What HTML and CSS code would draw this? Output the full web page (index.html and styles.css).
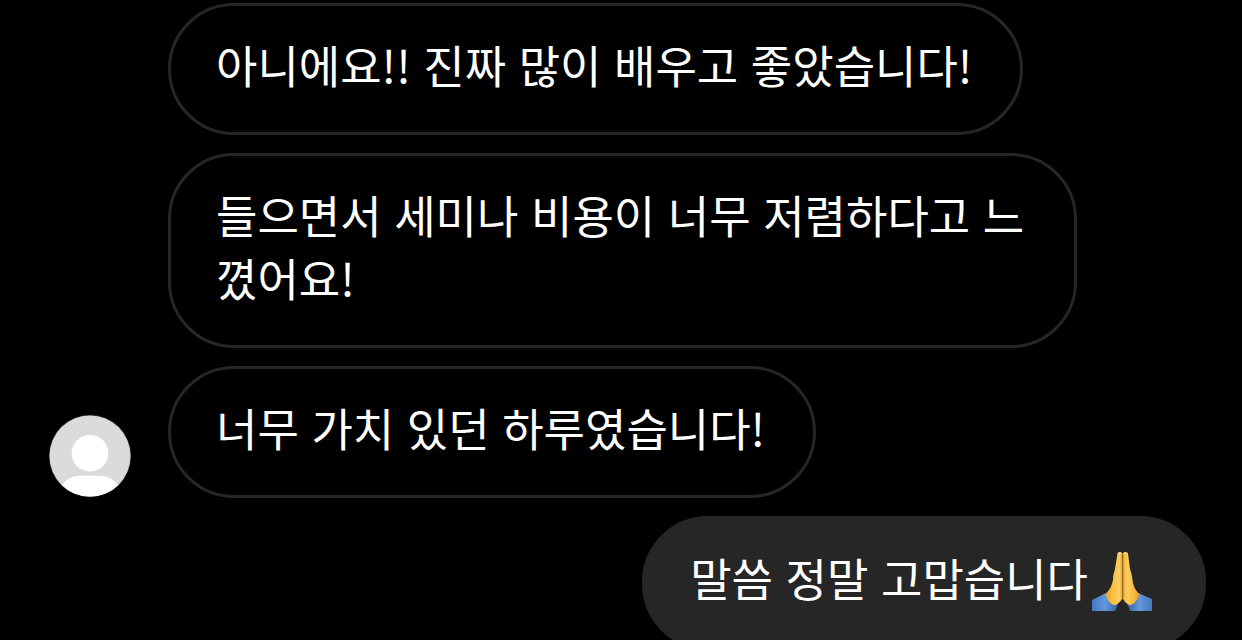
FILE: index.html
```html
<!DOCTYPE html>
<html lang="ko">
<head>
<meta charset="utf-8">
<meta name="viewport" content="width=device-width, initial-scale=1">
<title>메시지</title>
<link rel="stylesheet" href="styles.css">
</head>
<body>
<main class="chat">
  <section class="incoming">
    <svg class="avatar" viewBox="0 0 84 84" aria-hidden="true">
      <defs><clipPath id="disc"><circle cx="42" cy="42" r="40.5"/></clipPath></defs>
      <circle cx="42" cy="42" r="41.2" fill="#3a3a3a"/>
      <circle cx="42" cy="42" r="40.5" fill="#dbdbdb"/>
      <circle cx="42" cy="39.2" r="18.3" fill="#fff"/>
      <path d="M8 84C12 70 20 61.7 32 61.7H52C64 61.7 72 70 76 84Z" fill="#fff" clip-path="url(#disc)"/>
    </svg>
    <div class="messages">
      <p class="bubble">아니에요!! 진짜 많이 배우고 좋았습니다!</p>
      <p class="bubble">들으면서 세미나 비용이 너무 저렴하다고 느꼈어요!</p>
      <p class="bubble">너무 가치 있던 하루였습니다!</p>
    </div>
  </section>
  <section class="outgoing">
    <p class="bubble bubble-own">말씀 정말 고맙습니다<svg class="emoji" viewBox="0 0 60 60" role="img" aria-label="두 손 모아 감사">
      <defs>
        <linearGradient id="skinL" x1="0" x2="1"><stop offset="0" stop-color="#e9a02c"/><stop offset=".4" stop-color="#fbbf40"/><stop offset=".8" stop-color="#fdcf60"/><stop offset="1" stop-color="#dc9a30"/></linearGradient>
        <linearGradient id="skinR" x1="0" x2="1"><stop offset="0" stop-color="#efb23e"/><stop offset=".3" stop-color="#fdcc5a"/><stop offset=".7" stop-color="#f8b93c"/><stop offset="1" stop-color="#de9428"/></linearGradient>
        <linearGradient id="cuffL" x1="0" x2="1"><stop offset="0" stop-color="#4577bd"/><stop offset=".5" stop-color="#6398dc"/><stop offset="1" stop-color="#345f9f"/></linearGradient>
        <linearGradient id="cuffR" x1="1" x2="0"><stop offset="0" stop-color="#4577bd"/><stop offset=".5" stop-color="#6398dc"/><stop offset="1" stop-color="#345f9f"/></linearGradient>
      </defs>
      <path d="M0 49L14 42L26 53Q25 56 23 60H0Z" fill="url(#cuffL)"/>
      <path d="M60 48L46 42L35 53Q37 56 38 60H60Z" fill="url(#cuffR)"/>
      <path d="M25.500 2.500C26 .5 29.500 .5 30.500 2.500L31 17V47C29 50 25 54.500 22 54C18 53 14 47 13.500 43C18 39 20 34 21 29C20.700 24 22.500 21 23 18Z" fill="url(#skinL)"/>
      <path d="M31 2.500C31.500 .5 35.300 .5 36 2.500L38 18C39 21 40 24 40.500 29C41 34 43 39 47.500 43C47 47 42 54 38 54C35 53.500 32 50 30.600 47Z" fill="url(#skinR)"/>
      <path d="M30.700 4V47" fill="none" stroke="#96601f" stroke-width="1.200"/>
      <path d="M26.500 3C26.500 1.500 29.300 1.500 29.500 3M32 3C32 1.500 35 1.500 35 3" fill="none" stroke="#ffe5a0" stroke-width="1"/>
    </svg></p>
  </section>
</main>
</body>
</html>
```
FILE: styles.css
```css
* {
  box-sizing: border-box;
}

body {
  margin: 0;
  background: #000;
  color: #fff;
  font-family: "Noto Sans CJK KR", "Noto Sans", sans-serif;
  font-size: 45px;
  line-height: 63px;
  overflow: hidden;
}

.chat {
  display: flex;
  flex-direction: column;
  gap: 18px;
  padding: 3px 36px 0 48px;
}

.incoming {
  display: flex;
  align-items: flex-end;
  gap: 36px;
}

.avatar {
  flex: none;
  width: 84px;
  height: 84px;
}

.messages {
  display: flex;
  flex-direction: column;
  align-items: flex-start;
  gap: 18px;
  max-width: 909px;
}

.bubble {
  margin: 0;
  padding: 27px 48px 36px 45px;
  border: 3px solid #262626;
  border-radius: 66px;
}

.outgoing {
  display: flex;
  justify-content: flex-end;
}

.bubble-own {
  background: #262626;
}

.emoji {
  display: inline-block;
  width: 60px;
  height: 60px;
  margin: 0 3px 0 4px;
  vertical-align: -14px;
}
```
